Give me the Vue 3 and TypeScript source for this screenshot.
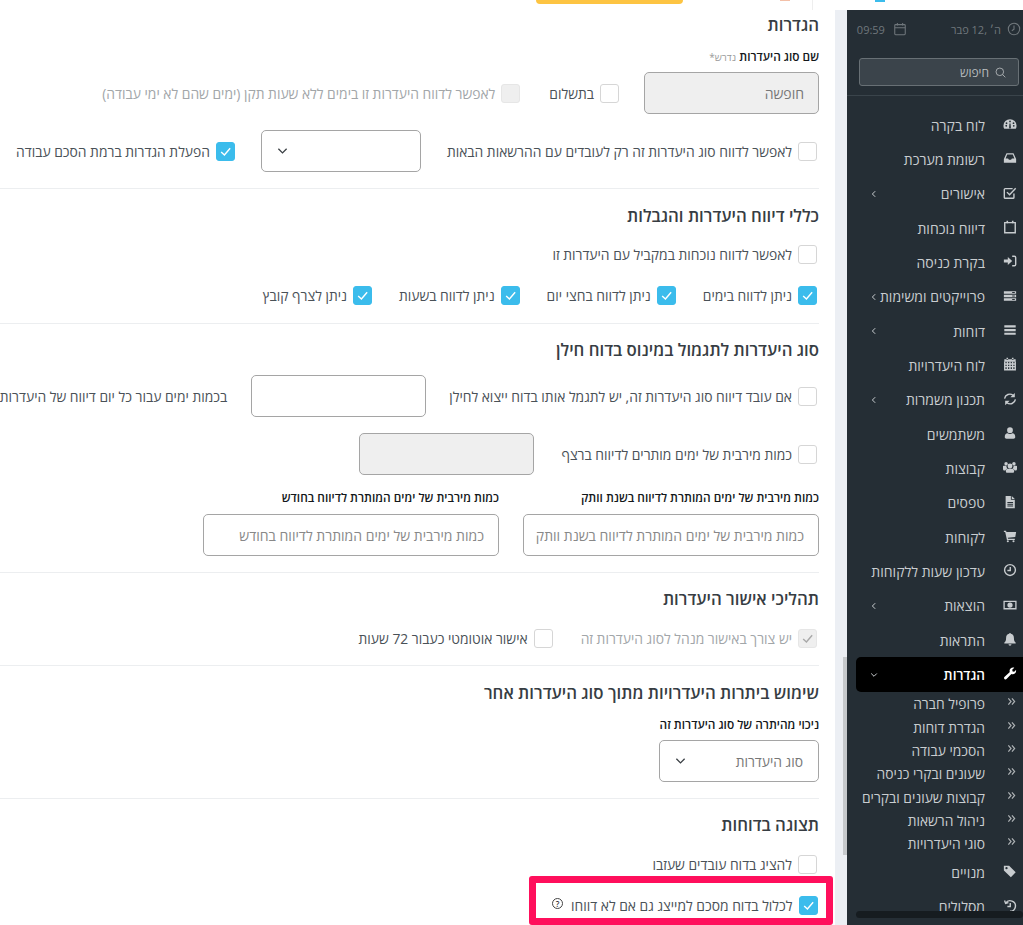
<template>
  <div class="page">
    <!-- top strip, only the bottom edge of the header is visible -->
    <div class="top-strip">
      <span class="tip-blue"></span>
      <span class="tip-line"></span>
      <span class="tip-orange"></span>
      <span class="tip-btn"></span>
    </div>

    <div class="body">
      <aside class="sidebar">
        <div class="side-head">
          <div class="when date">
            <svg class="hi" viewBox="0 0 16 16"><circle cx="8" cy="8" r="6.500" /><path d="M8 4v4.300L5.500 10" /></svg>
            <span>ה׳ ,12 פבר</span>
          </div>
          <div class="when">
            <svg class="hi" viewBox="0 0 16 16"><rect x="2" y="3" width="12" height="11.500" rx="1" /><path d="M2 6.500h12M5 1v3M11 1v3" /></svg>
            <span>09:59</span>
          </div>
        </div>
        <div class="side-search">
          <div class="search-box">
            <svg class="si" viewBox="0 0 16 16"><circle cx="7" cy="7" r="5.500" /><path d="M11 11l4 4" /></svg>
            <span>חיפוש</span>
          </div>
        </div>

        <nav class="menu">
          <template v-for="item in menu" :key="item.label">
            <div class="menu-item" :class="{ active: item.active }">
              <svg class="mi" viewBox="0 0 16 16">
                <path v-if="item.icon.fill" class="f" :d="item.icon.fill" />
                <path v-if="item.icon.line" class="l" :d="item.icon.line" />
              </svg>
              <span class="mt">{{ item.label }}</span>
              <svg v-if="item.arrow" class="arrow" viewBox="0 0 8 8">
                <path :d="item.active ? 'M1.200 2.500 4 5.300l2.800-2.800' : 'M5.200 1.200 2.400 4l2.800 2.800'" />
              </svg>
            </div>
            <template v-if="item.active">
              <div v-for="sub in subMenu" :key="sub" class="sub-item">
                <svg class="dbl" viewBox="0 0 10 10"><path d="M1.500 1.500 4.500 5l-3 3.500M5.500 1.500 8.500 5l-3 3.500" /></svg>
                <span class="mt">{{ sub }}</span>
              </div>
            </template>
          </template>
        </nav>
        <div class="side-scroll"></div>
      </aside>

      <div class="gutter"><span class="gutter-thumb"></span></div>

      <main class="main">
        <section class="sec s1">
          <h3>הגדרות</h3>
          <label class="field-label first">שם סוג היעדרות <small>נדרש*</small></label>
          <div class="row mt8">
            <input class="inp w175" disabled value="חופשה" />
            <span class="chk-row">
              <span class="chk"></span><span>בתשלום</span>
            </span>
            <span class="chk-row muted gap29">
              <span class="chk off"></span><span>לאפשר לדווח היעדרות זו בימים ללא שעות תקן (ימים שהם לא ימי עבודה)</span>
            </span>
          </div>
          <div class="row pad2 mt16 gap26">
            <span class="chk-row">
              <span class="chk"></span><span>לאפשר לדווח סוג היעדרות זה רק לעובדים עם ההרשאות הבאות</span>
            </span>
            <div class="sel w160">
              <svg class="caret" viewBox="0 0 12 8"><path d="M1.500 1.500 6 6l4.500-4.500" /></svg>
            </div>
            <span class="chk-row">
              <span class="chk on"><svg viewBox="0 0 12 12"><path d="M2 6.500 5 9.300 10.300 3" /></svg></span>
              <span>הפעלת הגדרות ברמת הסכם עבודה</span>
            </span>
          </div>
        </section>

        <section class="sec s2">
          <h3>כללי דיווח היעדרות והגבלות</h3>
          <div class="row pad2 h20 mt16">
            <span class="chk-row"><span class="chk"></span><span>לאפשר לדווח נוכחות במקביל עם היעדרות זו</span></span>
          </div>
          <div class="row pad2 h20 mt21 gap27">
            <span v-for="opt in reportOptions" :key="opt" class="chk-row">
              <span class="chk on"><svg viewBox="0 0 12 12"><path d="M2 6.500 5 9.300 10.300 3" /></svg></span>
              <span>{{ opt }}</span>
            </span>
          </div>
        </section>

        <section class="sec s3">
          <h3>סוג היעדרות לתגמול במינוס בדוח חילן</h3>
          <div class="row pad2 mt13 gap23">
            <span class="chk-row"><span class="chk"></span><span>אם עובד דיווח סוג היעדרות זה, יש לתגמל אותו בדוח ייצוא לחילן</span></span>
            <input class="inp w175" />
            <span class="plain">בכמות ימים עבור כל יום דיווח של היעדרות</span>
          </div>
          <div class="row pad2 mt16 gap27">
            <span class="chk-row"><span class="chk"></span><span>כמות מירבית של ימים מותרים לדיווח ברצף</span></span>
            <input class="inp w175" disabled />
          </div>
          <div class="row two mt14">
            <label class="field-label w296">כמות מירבית של ימים המותרת לדיווח בשנת וותק</label>
            <label class="field-label w296">כמות מירבית של ימים המותרת לדיווח בחודש</label>
          </div>
          <div class="row two mt9">
            <input class="inp w296" placeholder="כמות מירבית של ימים המותרת לדיווח בשנת וותק" />
            <input class="inp w296" placeholder="כמות מירבית של ימים המותרת לדיווח בחודש" />
          </div>
        </section>

        <section class="sec s4">
          <h3>תהליכי אישור היעדרות</h3>
          <div class="row pad2 h20 mt17 gap28">
            <span class="chk-row muted">
              <span class="chk off"><svg viewBox="0 0 12 12"><path d="M2 6.500 5 9.300 10.300 3" /></svg></span>
              <span>יש צורך באישור מנהל לסוג היעדרות זה</span>
            </span>
            <span class="chk-row"><span class="chk"></span><span>אישור אוטומטי כעבור 72 שעות</span></span>
          </div>
        </section>

        <section class="sec s5">
          <h3>שימוש ביתרות היעדרויות מתוך סוג היעדרות אחר</h3>
          <label class="field-label first">ניכוי מהיתרה של סוג היעדרות זה</label>
          <div class="row mt8">
            <div class="sel w160">
              <span class="sel-text">סוג היעדרות</span>
              <svg class="caret" viewBox="0 0 12 8"><path d="M1.500 1.500 6 6l4.500-4.500" /></svg>
            </div>
          </div>
        </section>

        <section class="sec s6">
          <h3>תצוגה בדוחות</h3>
          <div class="row pad2 h20 mt17">
            <span class="chk-row"><span class="chk"></span><span>להציג בדוח עובדים שעזבו</span></span>
          </div>
          <div class="mark">
            <span class="chk-row">
              <span class="chk on"><svg viewBox="0 0 12 12"><path d="M2 6.500 5 9.300 10.300 3" /></svg></span>
              <span>לכלול בדוח מסכם למייצג גם אם לא דווחו</span>
              <span class="help">?</span>
            </span>
          </div>
        </section>
      </main>
    </div>
  </div>
</template>

<script setup lang="ts">
interface Icon {
  fill?: string
  line?: string
}

interface MenuItem {
  label: string
  icon: Icon
  arrow?: boolean
  active?: boolean
}

const reportOptions = ['ניתן לדווח בימים', 'ניתן לדווח בחצי יום', 'ניתן לדווח בשעות', 'ניתן לצרף קובץ']

const subMenu = [
  'פרופיל חברה',
  'הגדרת דוחות',
  'הסכמי עבודה',
  'שעונים ובקרי כניסה',
  'קבוצות שעונים ובקרים',
  'ניהול הרשאות',
  'סוגי היעדרויות',
]

const menu: MenuItem[] = [
  { label: 'לוח בקרה', icon: { fill: 'M8 2.500A7.500 7.500 0 0 0 .5 10c0 1.300.3 2.500.9 3.500h13.200c.6-1 .9-2.200.9-3.500A7.500 7.500 0 0 0 8 2.500zM8 4a1 1 0 1 1 0 2 1 1 0 0 1 0-2zM4 6a1 1 0 1 1 0 2 1 1 0 0 1 0-2zm8 0a1 1 0 1 1 0 2 1 1 0 0 1 0-2zM2.700 10a1 1 0 1 1 2 0 1 1 0 0 1-2 0zm8.600 0a1 1 0 1 1 2 0 1 1 0 0 1-2 0zM7 12l.4-4.500h1.200L9 12a1 1 0 0 1-2 0z' } },
  { label: 'רשומת מערכת', icon: { fill: 'M4 2.500h8l3 6.500v4.500H1V9zM4.800 4 3 8.500h2.800l1 1.500h2.400l1-1.500H13L11.200 4z' } },
  { label: 'אישורים', arrow: true, icon: { line: 'M12.500 8.500V13a1 1 0 0 1-1 1H2.500a1 1 0 0 1-1-1V4a1 1 0 0 1 1-1H11M4.500 7 7.500 10 14.500 2.500' } },
  { label: 'דיווח נוכחות', icon: { fill: 'M4 .8h1.800v3H4zM10.200.8H12v3h-1.800z', line: 'M2 3h12v11.500H2z' } },
  { label: 'בקרת כניסה', icon: { fill: 'M1 6.300h4.500V3.500L10.500 8l-5 4.500V9.700H1z', line: 'M10.500 2.500H13a1.500 1.500 0 0 1 1.500 1.500v8a1.500 1.500 0 0 1-1.500 1.500h-2.500' } },
  { label: 'פרוייקטים ומשימות', arrow: true, icon: { fill: 'M1 2.500h14v3H1zM1 6.500h14v3H1zM1 10.500h14v3H1zM10.500 3.500v1h3v-1zM10.500 7.500v1h3v-1zM10.500 11.500v1h3v-1z' } },
  { label: 'דוחות', arrow: true, icon: { fill: 'M1.500 2.500h13v2.500h-13zM1.500 6.800h13v2.500h-13zM1.500 11h13v2.500h-13z' } },
  { label: 'לוח היעדרויות', icon: { fill: 'M4 .8h1.800v2.700H4zM10.200.8H12v2.700h-1.800zM1.500 2.500h13v3h-13z', line: 'M2 5v9.500h12V5M2 8h12M2 11h12M5 5v9.500M8 5v9.500M11 5v9.500' } },
  { label: 'תכנון משמרות', arrow: true, icon: { fill: 'M13.500 1v5H8.500l1.900-1.900zM2.500 15v-5h5l-1.900 1.900z', line: 'M1.800 7.500A6 6 0 0 1 11.500 3.800M14.200 8.500A6 6 0 0 1 4.500 12.200' } },
  { label: 'משתמשים', icon: { fill: 'M8 1.500a3.300 3.300 0 1 1 0 6.600 3.300 3.300 0 0 1 0-6.600zM5.200 8.300c.8.600 1.700.9 2.800.9s2-.3 2.800-.9c2 .1 3.200 1.700 3.200 4.200 0 1.200-.8 2-2 2H4c-1.200 0-2-.8-2-2 0-2.500 1.200-4.100 3.200-4.200z' } },
  { label: 'קבוצות', icon: { fill: 'M3.500 2.300a2 2 0 1 1 0 4 2 2 0 0 1 0-4zM12.500 2.300a2 2 0 1 1 0 4 2 2 0 0 1 0-4zM8 4a2.800 2.800 0 1 1 0 5.600A2.800 2.800 0 0 1 8 4zM0 7.500c0-.6.500-.8 1.500-.8h2.300c0 1.200.4 2.200 1.200 3-1.200.5-1.900 1.300-2.200 2.300H1.500C.5 12 0 11.300 0 10zM16 7.500c0-.6-.5-.8-1.500-.8h-2.300c0 1.200-.4 2.200-1.200 3 1.200.5 1.900 1.300 2.200 2.300h1.300c1 0 1.500-.7 1.500-2zM5.500 10h5c1.500 0 2.200 1.200 2.200 3 0 1-.6 1.500-1.500 1.500H4.800c-.9 0-1.500-.5-1.500-1.500 0-1.800.7-3 2.200-3z' } },
  { label: 'טפסים', icon: { fill: 'M3 1h6v4.500h4.500V15H3zM10 1l3.500 3.500H10zM5 8v1h6.500V8zM5 10v1h6.500v-1zM5 12v1h6.500v-1z' } },
  { label: 'לקוחות', icon: { fill: 'M1 2h2.500l.4 1.500H15l-1 5.500-8.500 1 .3 1H13.500v1.500H4.500L2.500 3.500H1zM5.500 12.800a1.200 1.200 0 1 1 0 2.400 1.200 1.200 0 0 1 0-2.400zM12 12.800a1.200 1.200 0 1 1 0 2.400 1.200 1.200 0 0 1 0-2.400z' } },
  { label: 'עדכון שעות ללקוחות', icon: { line: 'M8 1.800a6.200 6.200 0 1 1 0 12.400A6.200 6.200 0 0 1 8 1.800zM8.300 4.500v4H5' } },
  { label: 'הוצאות', arrow: true, icon: { fill: 'M.5 3h15v10H.5zM2 4.500v7h12v-7zM8 5a3 3 0 1 1 0 6 3 3 0 0 1 0-6z' } },
  { label: 'התראות', icon: { fill: 'M8 1a1 1 0 0 1 1 1c2.500.5 3.500 2.300 3.500 5 0 3 .8 4 2 5v1H1.500v-1c1.200-1 2-2 2-5 0-2.700 1-4.500 3.500-5a1 1 0 0 1 1-1zM6.300 14h3.400a1.700 1.700 0 0 1-3.400 0z' } },
  { label: 'הגדרות', arrow: true, active: true, icon: { fill: 'M15 4.200c0 2.300-1.800 4-4 4-.5 0-1-.1-1.400-.3L4 13.700A1.700 1.700 0 0 1 1.600 11.300L7.800 5.700C7.600 5.200 7.500 4.700 7.500 4.200c0-2.200 1.800-3.700 4-3.700.5 0 1 .1 1.400.3L10.500 3.200l.5 1.800 1.800.5 2-2.100c.1.300.2.500.2.800z' } },
  { label: 'מנויים', icon: { fill: 'M1 2h6l7.500 7.500-5.500 5.500L1 7.500zM4 3.500a1.300 1.300 0 1 0 0 2.600 1.300 1.300 0 0 0 0-2.600z' } },
  { label: 'מסלולים', icon: { line: 'M3 5A6 6 0 1 1 8 14M1.800 1.800 3 5l3.200-.8M8.300 4.500v4H5' } },
]
</script>

<style scoped>
.page {
  width: 1023px;
  height: 925px;
  overflow: hidden;
  direction: rtl;
  background: #fff;
  font-family: "Open Sans", "Liberation Sans", sans-serif;
  font-size: 13.85px;
  color: #4a5157;
  display: flex;
  flex-direction: column;
}

/* top strip */
.top-strip {
  height: 10px;
  flex: none;
  display: flex;
  align-items: flex-start;
  background: #fff;
}
.tip-blue {
  width: 10px;
  height: 2px;
  margin-right: 138px;
  background: #3bbcec;
}
.tip-line {
  width: 1px;
  height: 10px;
  margin-right: 62px;
  background: #eeeeee;
}
.tip-orange {
  width: 10px;
  height: 1px;
  margin-right: 22px;
  background: #f3c0a8;
}
.tip-btn {
  width: 147px;
  height: 4px;
  margin-right: 97px;
  background: #fdc442;
  border-radius: 0 0 12px 12px;
}

.body {
  flex: 1;
  min-height: 0;
  display: flex;
}

/* sidebar */
.sidebar {
  width: 176px;
  flex: none;
  position: relative;
  background: #252e35;
  color: #c9cdd0;
  overflow: hidden;
}
.side-head {
  height: 37px;
  padding: 9px 2px 0 0;
  box-sizing: border-box;
  display: flex;
  font-size: 11px;
  color: #70777c;
  white-space: nowrap;
}
.when {
  height: 20px;
  display: flex;
  align-items: center;
  gap: 8px;
}
.date {
  gap: 6px;
  margin-left: 44px;
}
.hi {
  width: 14px;
  height: 14px;
  flex: none;
  fill: none;
  stroke: #70777c;
  stroke-width: 1.200;
}
.side-search {
  height: 49px;
  padding: 11px 4px 0 12px;
  box-sizing: border-box;
  border-bottom: 1px solid #3a444b;
}
.search-box {
  height: 28px;
  box-sizing: border-box;
  background: #3b444b;
  border: 1px solid #687075;
  border-radius: 3px;
  display: flex;
  align-items: center;
  gap: 6px;
  padding-right: 12px;
  font-size: 12px;
  color: #b8bcbf;
}
.si {
  width: 11px;
  height: 11px;
  fill: none;
  stroke: #b8bcbf;
  stroke-width: 1.200;
}
.menu {
  padding: 12px 0 0;
  margin-left: 9px;
}
.menu-item {
  height: 34.33px;
  display: flex;
  align-items: center;
  padding: 0 6px 0 14px;
  font-size: 14px;
  white-space: nowrap;
}
.menu-item.active {
  background: #000;
  color: #fff;
  font-size: 13.5px;
  font-weight: 600;
  height: 35px;
  border-radius: 5px 0 0 5px;
}
.mi {
  width: 14px;
  height: 14px;
  flex: none;
  margin-left: 18px;
  margin-top: -2px;
}
.mi .f {
  fill: #c8cccf;
  fill-rule: evenodd;
}
.mi .l {
  fill: none;
  stroke: #c8cccf;
  stroke-width: 1.600;
}
.active .mi .f {
  fill: #fff;
}
.arrow {
  width: 8px;
  height: 8px;
  margin-right: auto;
  flex: none;
  fill: none;
  stroke: #c9cdd0;
  stroke-width: 1;
}
.sub-item {
  height: 23.3px;
  display: flex;
  align-items: center;
  padding-right: 7px;
  font-size: 13.8px;
  white-space: nowrap;
}
.dbl {
  width: 9px;
  height: 9px;
  flex: none;
  margin-left: 22px;
  margin-top: -4px;
  fill: none;
  stroke: #aeb2b5;
  stroke-width: 1.300;
}
.side-scroll {
  position: absolute;
  left: 9px;
  right: 0;
  bottom: 7px;
  height: 7px;
  border-radius: 4px;
  background: #161c20;
}

.gutter {
  width: 12px;
  flex: none;
  background: #eceff4;
  padding-top: 647px;
  box-sizing: border-box;
}
.gutter-thumb {
  display: block;
  width: 4px;
  height: 198px;
  background: #c6c9cc;
}

/* main form */
.main {
  flex: 1;
  min-width: 0;
  overflow: hidden;
  padding-right: 16px;
}
.sec {
  border-bottom: 1px solid #eceef0;
}
.s1 { padding: 3px 0 16px; }
.s2 { padding: 15px 0 18px; }
.s3 { padding: 14px 0 16px; }
.s4 { padding: 14px 0 17px; }
.s5 { padding: 15px 0 16px; }
.s6 { padding: 14px 0 0; border-bottom: 0; }
h3 {
  margin: 0;
  height: 24px;
  line-height: 24px;
  font-size: 16.8px;
  font-weight: 600;
  color: #373d43;
  white-space: nowrap;
}
.field-label {
  display: block;
  height: 16px;
  line-height: 16px;
  font-size: 11.85px;
  font-weight: 600;
  color: #14181b;
  white-space: nowrap;
}
.field-label small {
  font-size: 10px;
  font-weight: 400;
  color: #9a9a9a;
}
.first {
  margin-top: 11px;
}
.row {
  display: flex;
  align-items: center;
  gap: 25px;
  white-space: nowrap;
}
.pad2 { padding-right: 2px; }
.h20 { height: 20px; }
.two { gap: 24px; }
.gap23 { gap: 23px; }
.gap26 { gap: 26px; }
.gap27 { gap: 27px; }
.gap28 { gap: 28px; }
.gap29 { margin-right: 4px; }
.plain { margin-right: 1px; }
.mt8 { margin-top: 8px; }
.mt9 { margin-top: 9px; }
.mt13 { margin-top: 13px; }
.mt14 { margin-top: 14px; }
.mt16 { margin-top: 16px; }
.mt17 { margin-top: 17px; }
.mt21 { margin-top: 21px; }
.chk-row {
  display: inline-flex;
  align-items: center;
  gap: 6px;
  flex: none;
}
.muted {
  color: #a2a6a9;
}
.chk {
  width: 19px;
  height: 19px;
  box-sizing: border-box;
  flex: none;
  border: 1px solid #d6d6d6;
  border-radius: 3px;
  background: #fff;
  display: inline-flex;
  align-items: center;
  justify-content: center;
}
.chk svg {
  width: 13px;
  height: 13px;
  fill: none;
  stroke: #fff;
  stroke-width: 1.300;
}
.chk.on {
  background: #3bbcec;
  border-color: #3bbcec;
}
.chk.off {
  background: #efefef;
  border-color: #e6e6e6;
}
.chk.off svg {
  stroke: #a8a8a8;
}
.inp {
  height: 42px;
  box-sizing: border-box;
  flex: none;
  border: 1px solid #a5a5a5;
  border-radius: 5px;
  background: #fff;
  padding: 0 14px 0 6px;
  font: inherit;
  font-size: 14px;
  color: #777;
  direction: rtl;
  outline: none;
}
.inp:disabled {
  background: #efefef;
  color: #777;
}
.inp::placeholder {
  color: #888;
  opacity: 1;
}
.w160 { width: 160px; }
.w175 { width: 175px; }
.w296 { width: 296px; }
.sel {
  height: 42px;
  box-sizing: border-box;
  flex: none;
  border: 1px solid #a5a5a5;
  border-radius: 5px;
  background: #fff;
  padding: 0 15px;
  display: flex;
  align-items: center;
  color: #777;
}
.caret {
  width: 11px;
  height: 8px;
  margin-right: auto;
  fill: none;
  stroke: #3a3f44;
  stroke-width: 1.400;
}
.mark {
  width: 304px;
  box-sizing: border-box;
  height: 49px;
  margin: 2px -14px 0 0;
  border: 7.500px solid #ff0f5c;
  border-radius: 3px;
  padding: 12.500px 8.500px 0 0;
  background: #fff;
}
.help {
  width: 11px;
  height: 11px;
  box-sizing: border-box;
  border: 1px solid #444;
  border-radius: 50%;
  font-size: 8px;
  font-weight: 600;
  line-height: 9px;
  text-align: center;
  color: #333;
  margin: -4px 2px 0 0;
  flex: none;
}
</style>

<style>
html,
body {
  margin: 0;
  overflow: hidden;
}
</style>
